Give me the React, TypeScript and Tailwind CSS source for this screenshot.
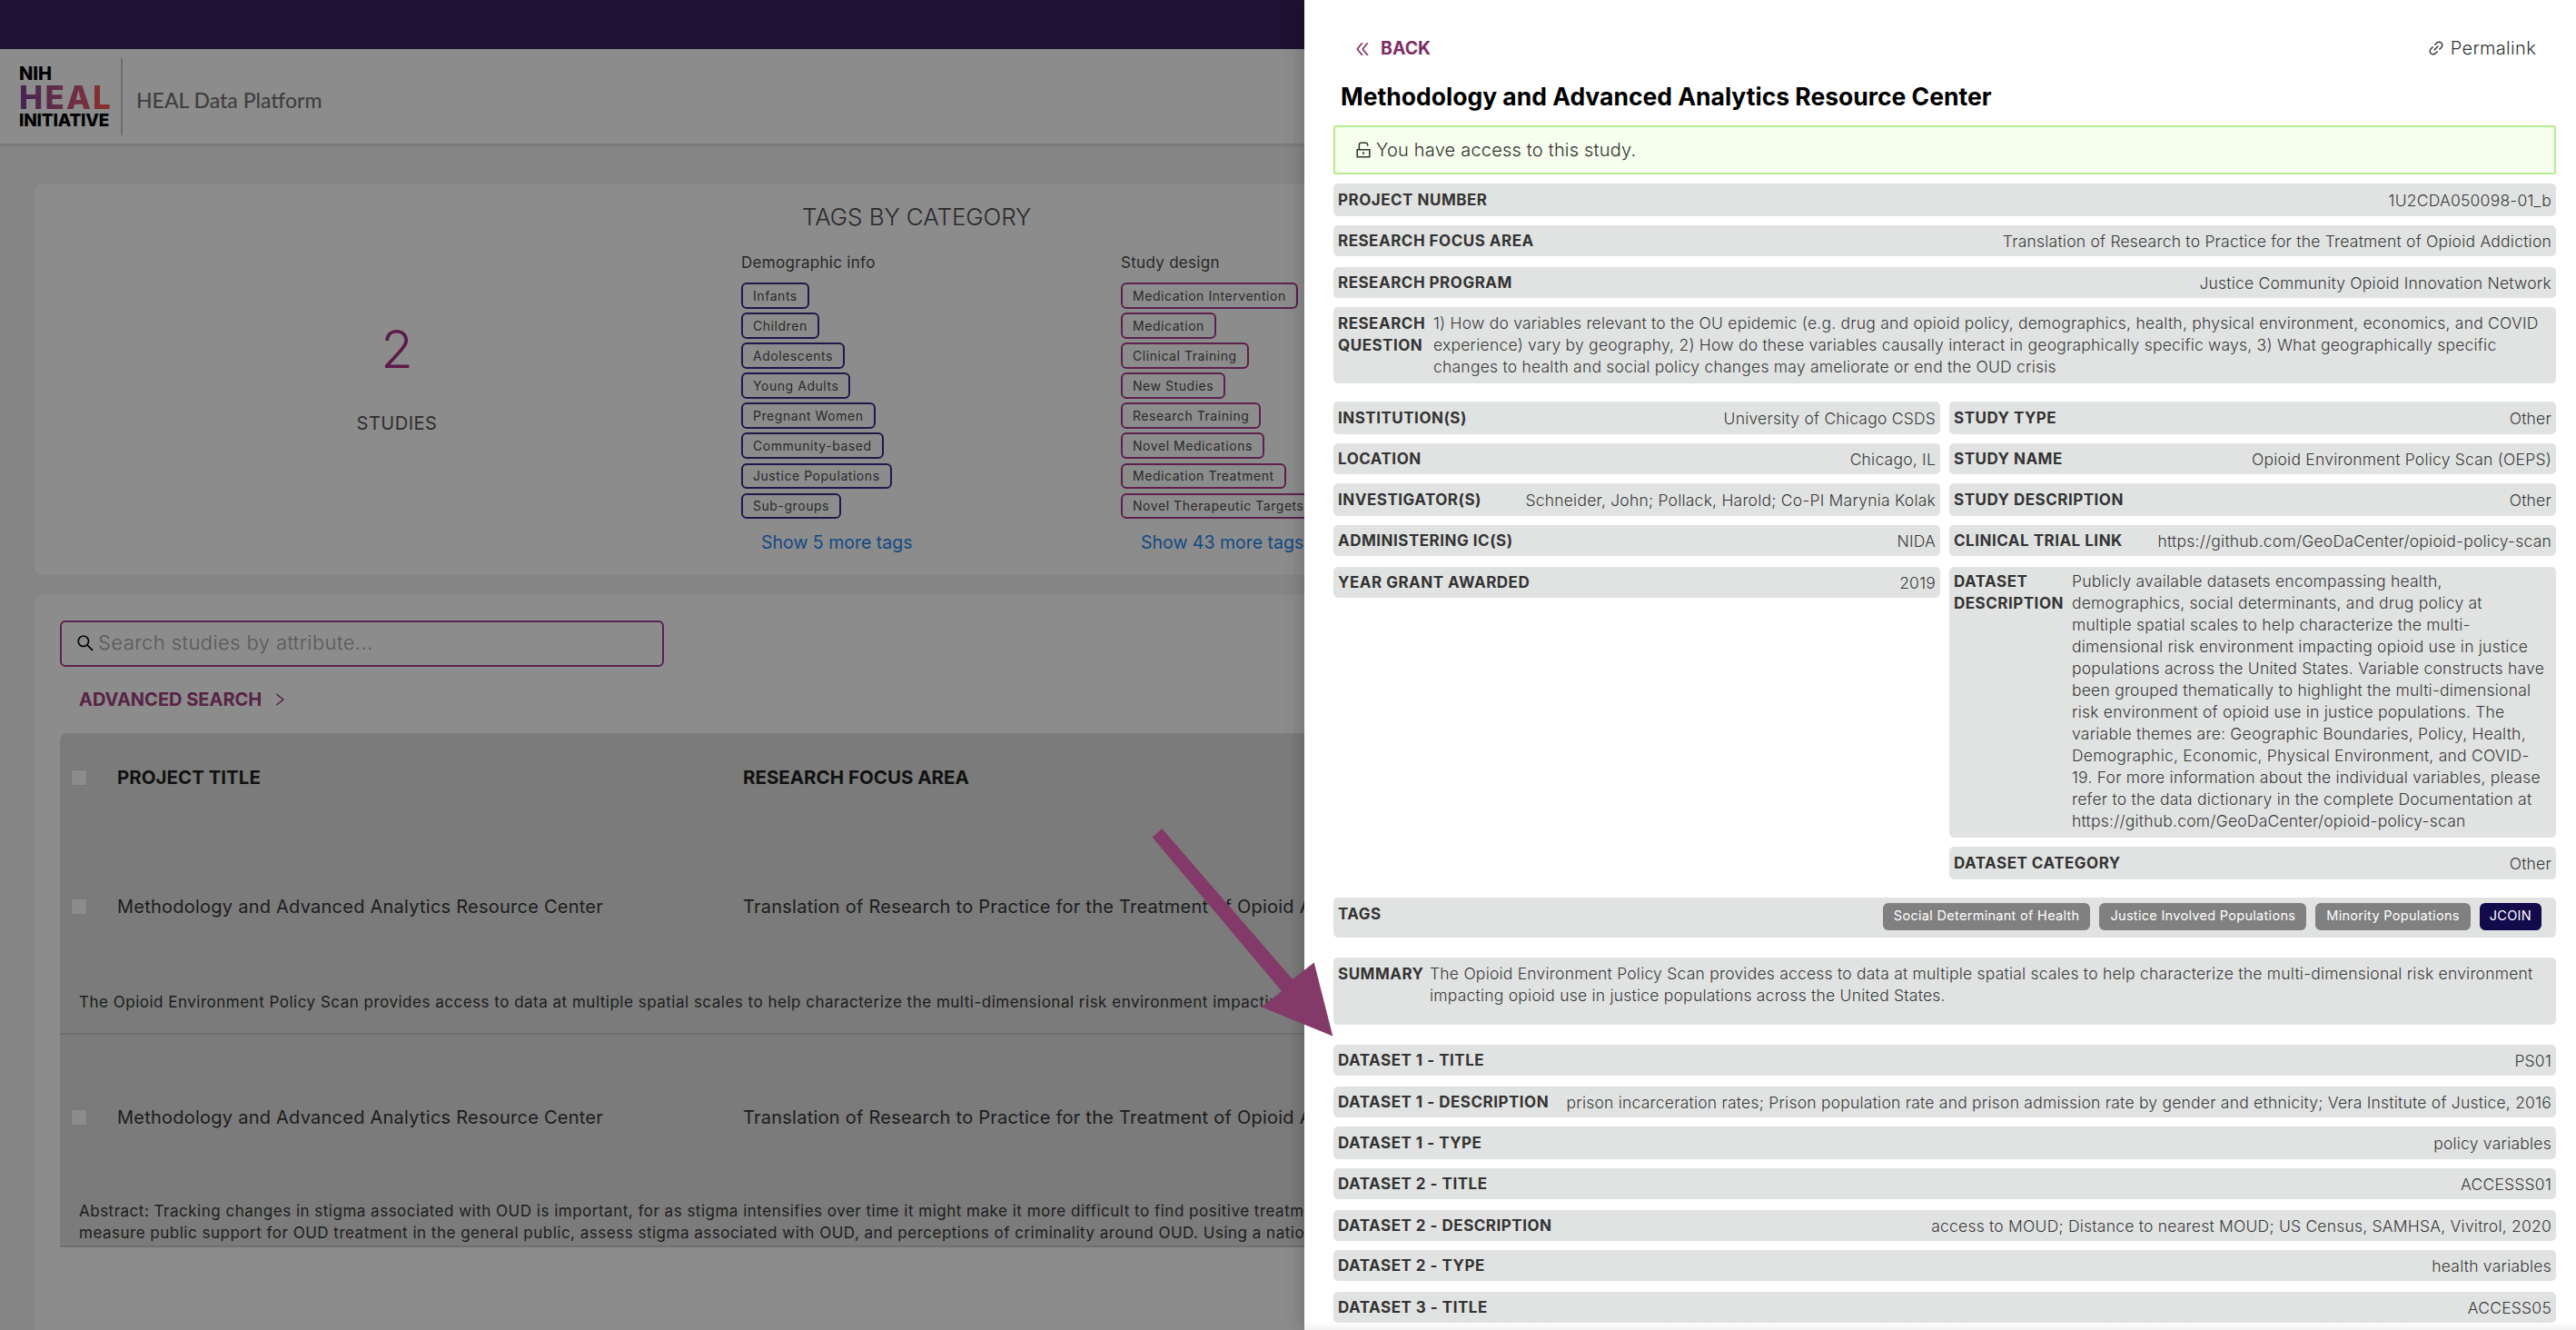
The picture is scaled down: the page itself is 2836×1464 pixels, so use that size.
import { AiOutlineDoubleLeft, AiOutlineLink, AiOutlineRight, AiOutlineSearch, AiOutlineUnlock } from "react-icons/ai";

const demographicTags = ["Infants", "Children", "Adolescents", "Young Adults", "Pregnant Women", "Community-based", "Justice Populations", "Sub-groups"];
const designTags = ["Medication Intervention", "Medication", "Clinical Training", "New Studies", "Research Training", "Novel Medications", "Medication Treatment", "Novel Therapeutic Targets"];

const leftFields = [
  { label: "INSTITUTION(S)", value: "University of Chicago CSDS", size: "h-[36px]" },
  { label: "LOCATION", value: "Chicago, IL", size: "h-[34px]" },
  { label: "INVESTIGATOR(S)", value: "Schneider, John; Pollack, Harold; Co-PI Marynia Kolak", size: "h-[36px]" },
  { label: "ADMINISTERING IC(S)", value: "NIDA", size: "h-[34px]" },
  { label: "YEAR GRANT AWARDED", value: "2019", size: "h-[34px] mt-[2px]" },
];

const rightFields = [
  { label: "STUDY TYPE", value: "Other", size: "h-[36px]" },
  { label: "STUDY NAME", value: "Opioid Environment Policy Scan (OEPS)", size: "h-[34px]" },
  { label: "STUDY DESCRIPTION", value: "Other", size: "h-[36px]" },
  { label: "CLINICAL TRIAL LINK", value: "https://github.com/GeoDaCenter/opioid-policy-scan", size: "h-[34px]" },
];

const datasetFields = [
  { label: "DATASET 1 - TITLE", value: "PS01", size: "h-[34px]" },
  { label: "DATASET 1 - DESCRIPTION", value: "prison incarceration rates; Prison population rate and prison admission rate by gender and ethnicity; Vera Institute of Justice, 2016", size: "h-[34px] mt-[2px]" },
  { label: "DATASET 1 - TYPE", value: "policy variables", size: "h-[36px]" },
  { label: "DATASET 2 - TITLE", value: "ACCESSS01", size: "h-[34px]" },
  { label: "DATASET 2 - DESCRIPTION", value: "access to MOUD; Distance to nearest MOUD; US Census, SAMHSA, Vivitrol, 2020", size: "h-[34px] mt-[2px]" },
  { label: "DATASET 2 - TYPE", value: "health variables", size: "h-[34px]" },
  { label: "DATASET 3 - TITLE", value: "ACCESS05", size: "h-[34px] mt-[2px]" },
];

function Field({ label, value, size }: { label: string; value: string; size: string }) {
  return (
    <div className={`flex items-center justify-between rounded-[5px] bg-[#e1e3e2] px-[5px] pt-[2px] whitespace-nowrap ${size}`}>
      <span className="text-[17px] font-bold tracking-[0.5px] text-[#333]">{label}</span>
      <span className="text-[17.5px] font-light tracking-[0.22px] text-[#3a3a3a]">{value}</span>
    </div>
  );
}

function TagColumn({ title, tags, border, more, width }: { title: string; tags: string[]; border: string; more: string; width: string }) {
  return (
    <div className={`shrink-0 ${width}`}>
      <p className="h-[24px] text-[17px] leading-[24px] tracking-[0.3px] text-[#4a4a4a]">{title}</p>
      <div className="mt-[9px] flex flex-col items-start gap-[4.6px] pt-[1px]">
        {tags.map((tag) => (
          <span key={tag} className={`flex h-[28.5px] items-center rounded-[6px] border-2 px-[11px] text-[14px] tracking-[0.55px] whitespace-nowrap text-[#4d4d4d] ${border}`}>
            {tag}
          </span>
        ))}
      </div>
      <p className="mt-[12px] pl-[22px] text-[19.5px] leading-[28px] text-[#1f86ee]">{more}</p>
    </div>
  );
}

function StudyRow({ height }: { height: string }) {
  return (
    <div className={`flex items-center pl-[12px] text-[20px] tracking-[0.24px] text-[#363636] whitespace-nowrap ${height}`}>
      <span className="size-[18px] shrink-0 rounded-[2px] border border-[#d9d9d9] bg-white" />
      <span className="ml-[33px] w-[689px] shrink-0">Methodology and Advanced Analytics Resource Center</span>
      <span>Translation of Research to Practice for the Treatment of Opioid Addiction</span>
    </div>
  );
}

function App() {
  return (
    <div className="relative h-[1464px] overflow-hidden bg-[#f2f2f2] font-['Inter',sans-serif]">
      <div className="h-[54px] bg-[#37215f]" />
      <header className="flex h-[107px] items-center border-b-[3px] border-[#e0e0e0] bg-white pl-[21px]">
        <div className="mt-[1px] flex w-[102px] flex-col font-extrabold text-black">
          <span className="text-[20px] leading-[26px]">NIH</span>
          <span className="bg-gradient-to-r from-[#803f9a] to-[#ff5a50] bg-clip-text text-[35px] leading-[26px] tracking-[2.2px] text-transparent">HEAL</span>
          <span className="text-[19px] leading-[26px] tracking-[-0.2px]">INITIATIVE</span>
        </div>
        <div className="ml-[10px] h-[85px] w-[2px] bg-[#c9c9c9]" />
        <span className="mt-[8px] ml-[15px] font-['Lato',sans-serif] text-[23px] font-medium text-[#737373]">HEAL Data Platform</span>
      </header>

      <section className="mx-[38px] mt-[41px] flex h-[431px] rounded-[8px] bg-white">
        <div className="w-[778px] shrink-0 pt-[147px] pl-[20px] text-center">
          <p className="text-[58px] leading-[70px] font-light text-[#a83085]">2</p>
          <p className="mt-[33px] text-[20px] leading-[28px] tracking-[0.5px] text-[#555]">STUDIES</p>
        </div>
        <div className="min-w-0 flex-1 pt-[19px]">
          <h2 className="ml-[67px] text-[26px] leading-[36px] font-light tracking-[-0.1px] text-[#4d4d4d]">TAGS BY CATEGORY</h2>
          <div className="mt-[20px] flex">
            <TagColumn title="Demographic info" tags={demographicTags} border="border-[#3c2a87]" more="Show 5 more tags" width="w-[418px]" />
            <TagColumn title="Study design" tags={designTags} border="border-[#a83c8d]" more="Show 43 more tags" width="w-[400px]" />
          </div>
        </div>
      </section>

      <section className="mx-[38px] mt-[22px] h-[900px] rounded-[8px] bg-white px-[28px] pt-[28px]">
        <div className="flex h-[51px] w-[665px] items-center rounded-[6px] border-2 border-[#a83c8d] pb-[2px] pl-[15px]">
          <AiOutlineSearch className="size-[22px] text-black" />
          <span className="ml-[3px] text-[22px] font-light tracking-[0.4px] text-[#a3a3a3]">Search studies by attribute...</span>
        </div>
        <div className="mt-[21px] flex items-center pl-[21px] text-[#a0407f]">
          <span className="text-[20px] font-bold">ADVANCED SEARCH</span>
          <AiOutlineRight className="ml-[11px] size-[18px]" />
        </div>
        <div className="mt-[22px] h-[566px] overflow-hidden rounded-t-[8px] border-b-2 border-[#c9cbca] bg-[#dee1df]">
          <div className="flex h-[98px] items-center pl-[12px] text-[20.5px] font-bold text-[#1f1f1f] whitespace-nowrap">
            <span className="size-[18px] shrink-0 rounded-[2px] border border-[#d9d9d9] bg-white" />
            <span className="ml-[33px] w-[689px] shrink-0">PROJECT TITLE</span>
            <span>RESEARCH FOCUS AREA</span>
          </div>
          <StudyRow height="h-[186px]" />
          <div className="h-[48px] border-b-2 border-[#c9cbca] pl-[21px] text-[17px] leading-[24px] tracking-[0.5px] whitespace-nowrap text-[#363636]">
            The Opioid Environment Policy Scan provides access to data at multiple spatial scales to help characterize the multi-dimensional risk environment impacting opioid use in justice populations across the United States.
          </div>
          <StudyRow height="h-[182px]" />
          <div className="pl-[21px] text-[17px] leading-[24px] tracking-[0.5px] whitespace-nowrap text-[#363636]">
            <p>Abstract: Tracking changes in stigma associated with OUD is important, for as stigma intensifies over time it might make it more difficult to find positive treatment outcomes and recovery in the population.</p>
            <p>measure public support for OUD treatment in the general public, assess stigma associated with OUD, and perceptions of criminality around OUD. Using a nationally representative sample of adults.</p>
          </div>
        </div>
      </section>

      {/* modal mask */}
      <div className="absolute inset-0 bg-black/45" />

      {/* study details drawer */}
      <aside className="absolute inset-y-0 right-0 w-[1400px] overflow-hidden bg-white pt-[38px] pr-[22px] pl-[32px] shadow-[-6px_0_16px_rgba(0,0,0,0.15)]">
        <div className="flex h-[30px] items-center justify-between">
          <div className="flex items-center pt-[2px] pl-[22px] text-[#7d2e65]">
            <AiOutlineDoubleLeft className="size-[20px]" />
            <span className="ml-[10px] text-[19.5px] font-bold">BACK</span>
          </div>
          <div className="flex items-center pr-[22px] text-[20px] font-light tracking-[0.3px] text-[#333]">
            <AiOutlineLink className="mr-[6px] size-[20px]" />
            Permalink
          </div>
        </div>
        <h1 className="mt-[20px] h-[36px] pl-[8px] text-[26.5px] leading-[36px] font-bold text-black">Methodology and Advanced Analytics Resource Center</h1>
        <div className="mt-[14px] flex h-[54px] items-center rounded-[2px] border-2 border-[#b7eb8f] bg-[#f6ffed] pl-[20px] text-[20px] font-light tracking-[0.2px] text-[#333]">
          <AiOutlineUnlock className="mr-[3px] size-[22px]" />
          You have access to this study.
        </div>

        <div className="mt-[10px] flex flex-col gap-[10px]">
          <Field label="PROJECT NUMBER" value="1U2CDA050098-01_b" size="h-[36px]" />
          <Field label="RESEARCH FOCUS AREA" value="Translation of Research to Practice for the Treatment of Opioid Addiction" size="h-[34px]" />
          <Field label="RESEARCH PROGRAM" value="Justice Community Opioid Innovation Network" size="h-[34px] mt-[2px]" />
          <div className="flex h-[84px] rounded-[5px] bg-[#e1e3e2] px-[5px] pt-[6px] text-[17px] leading-[24px] text-[#333]">
            <span className="w-[105px] shrink-0 font-bold tracking-[0.5px]">RESEARCH<br />QUESTION</span>
            <span className="text-[17.5px] font-light tracking-[0.22px] whitespace-nowrap text-[#3a3a3a]">
              1) How do variables relevant to the OU epidemic (e.g. drug and opioid policy, demographics, health, physical environment, economics, and COVID<br />
              experience) vary by geography, 2) How do these variables causally interact in geographically specific ways, 3) What geographically specific<br />
              changes to health and social policy changes may ameliorate or end the OUD crisis
            </span>
          </div>
        </div>

        <div className="mt-[20px] grid grid-cols-2 gap-x-[10px]">
          <div className="flex flex-col gap-[10px]">
            {leftFields.map((field) => (
              <Field key={field.label} {...field} />
            ))}
          </div>
          <div className="flex flex-col gap-[10px]">
            {rightFields.map((field) => (
              <Field key={field.label} {...field} />
            ))}
            <div className="mt-[2px] flex h-[298px] rounded-[5px] bg-[#e1e3e2] px-[5px] pt-[4px] text-[17px] leading-[24px] text-[#333]">
              <span className="w-[130px] shrink-0 font-bold tracking-[0.5px]">DATASET<br />DESCRIPTION</span>
              <span className="text-[17.5px] font-light tracking-[0.22px] whitespace-nowrap text-[#3a3a3a]">
                Publicly available datasets encompassing health,<br />
                demographics, social determinants, and drug policy at<br />
                multiple spatial scales to help characterize the multi-<br />
                dimensional risk environment impacting opioid use in justice<br />
                populations across the United States. Variable constructs have<br />
                been grouped thematically to highlight the multi-dimensional<br />
                risk environment of opioid use in justice populations. The<br />
                variable themes are: Geographic Boundaries, Policy, Health,<br />
                Demographic, Economic, Physical Environment, and COVID-<br />
                19. For more information about the individual variables, please<br />
                refer to the data dictionary in the complete Documentation at<br />
                https://github.com/GeoDaCenter/opioid-policy-scan
              </span>
            </div>
            <Field label="DATASET CATEGORY" value="Other" size="h-[36px]" />
          </div>
        </div>

        <div className="mt-[20px] flex h-[44px] justify-between rounded-[5px] bg-[#e1e3e2] pt-[6px] pr-[16px] pl-[5px]">
          <span className="text-[17px] leading-[24px] font-bold tracking-[0.5px] text-[#333]">TAGS</span>
          <div className="flex h-[30px] gap-[10px] text-[14.5px] tracking-[0.3px] text-white">
            <span className="flex items-center rounded-[6px] bg-[#808080] px-[12px] pb-[2px]">Social Determinant of Health</span>
            <span className="flex items-center rounded-[6px] bg-[#808080] px-[12px] pb-[2px]">Justice Involved Populations</span>
            <span className="flex items-center rounded-[6px] bg-[#808080] px-[12px] pb-[2px]">Minority Populations</span>
            <span className="flex items-center rounded-[6px] bg-[#120a4a] px-[11px] pb-[2px]">JCOIN</span>
          </div>
        </div>
        <div className="mt-[22px] flex h-[74px] rounded-[5px] bg-[#e1e3e2] px-[5px] pt-[6px] text-[17px] leading-[24px] text-[#333]">
          <span className="w-[101px] shrink-0 font-bold tracking-[0.5px]">SUMMARY</span>
          <span className="text-[17.5px] font-light tracking-[0.22px] whitespace-nowrap text-[#3a3a3a]">
            The Opioid Environment Policy Scan provides access to data at multiple spatial scales to help characterize the multi-dimensional risk environment<br />
            impacting opioid use in justice populations across the United States.
          </span>
        </div>
        <div className="mt-[22px] flex flex-col gap-[10px]">
          {datasetFields.map((field) => (
            <Field key={field.label} {...field} />
          ))}
        </div>
        <div className="absolute inset-x-0 bottom-0 h-[10px] bg-gradient-to-t from-black/5 to-transparent" />
      </aside>

      {/* annotation arrow */}
      <svg className="pointer-events-none absolute inset-0 size-full" viewBox="0 0 2836 1464">
        <polygon fill="#843a68" points="1279.3,912 1268.7,921.6 1411,1091 1389,1108.5 1467.3,1140.4 1446.7,1059.5 1423,1078" />
      </svg>
    </div>
  );
}

export default App;
